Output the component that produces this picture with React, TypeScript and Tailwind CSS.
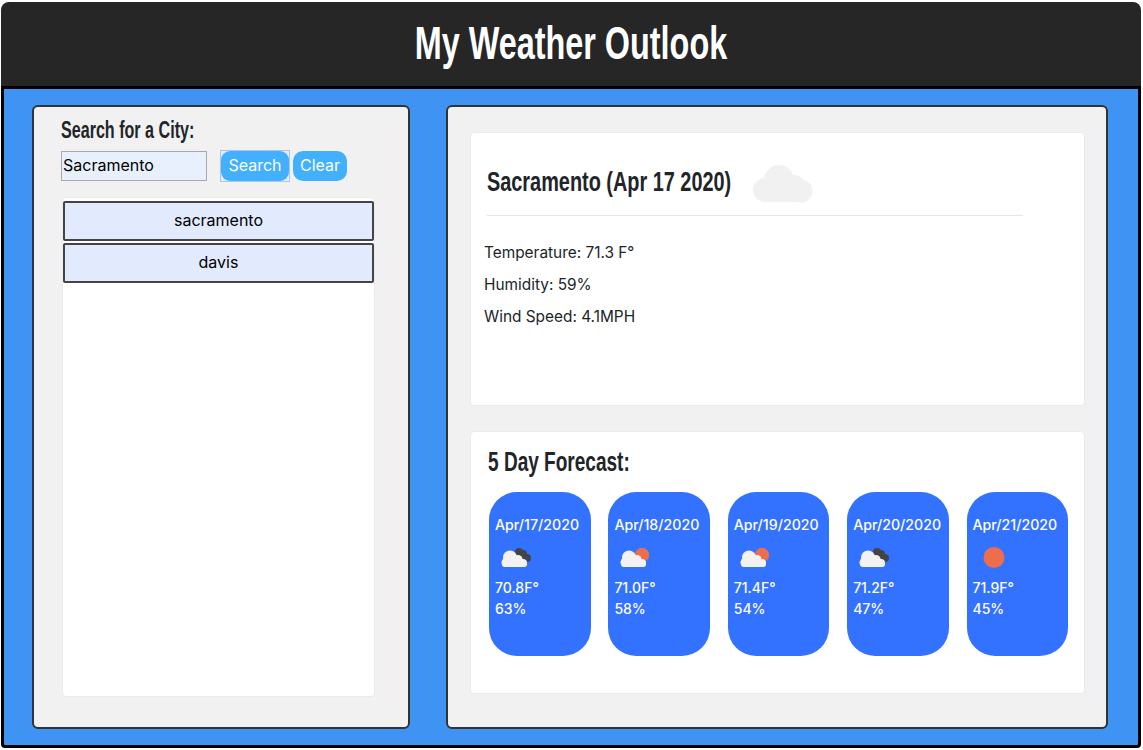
const narrow = "block whitespace-nowrap font-['Liberation_Sans',sans-serif] font-bold origin-left";

function SmallCloud() {
  return (
    <g fill="#f2f2f2">
      <circle cx="15" cy="10.5" r="7" />
      <circle cx="11" cy="15.5" r="4.5" />
      <circle cx="23" cy="12.5" r="4.5" />
      <circle cx="28" cy="16" r="4" />
      <rect x="7" y="14" width="25" height="6" rx="3" />
    </g>
  );
}

function WeatherIcon({ kind }: { kind: string }) {
  if (kind === "sun") {
    return (
      <svg width="40" height="22" viewBox="0 0 40 22" className="block">
        <circle cx="21" cy="10.5" r="10.5" fill="#ec6e4c" />
      </svg>
    );
  }
  return (
    <svg width="40" height="22" viewBox="0 0 40 22" className="block">
      {kind === "dark" ? (
        <g fill="#444444">
          <circle cx="24" cy="5" r="4" />
          <circle cx="28" cy="7" r="4" />
          <circle cx="32" cy="11" r="4" />
        </g>
      ) : (
        <circle cx="28" cy="8" r="7.2" fill="#ec6e4c" />
      )}
      <SmallCloud />
    </svg>
  );
}

const days = [
  { date: "Apr/17/2020", icon: "dark", temp: "70.8F°", hum: "63%" },
  { date: "Apr/18/2020", icon: "sunny", temp: "71.0F°", hum: "58%" },
  { date: "Apr/19/2020", icon: "sunny", temp: "71.4F°", hum: "54%" },
  { date: "Apr/20/2020", icon: "dark", temp: "71.2F°", hum: "47%" },
  { date: "Apr/21/2020", icon: "sun", temp: "71.9F°", hum: "45%" },
];

export default function App() {
  return (
    <div className="w-[1143px] h-[750px] bg-white pt-[2px] pl-[1px] font-['Inter',sans-serif] text-[#212529]">
      <div className="w-[1140px] h-[746px] flex flex-col">
        <header className="h-[84px] shrink-0 bg-[#262626] rounded-t-[8px] flex items-center justify-center pb-[2px]">
          <h1 className="whitespace-nowrap font-['Liberation_Sans',sans-serif] font-bold text-white text-[46px] leading-none scale-x-[0.704]">My Weather Outlook</h1>
        </header>
        <main className="flex-1 min-h-0 border-[3px] border-black rounded-b-[4px] bg-[#3f93f2] pt-[16px] pl-[28px] flex gap-[36px]">
          <section className="w-[378px] h-[624px] shrink-0 border-2 border-[#333333] rounded-[6px] bg-[#f1f1f1] pl-[27px] pt-[10px]">
            <h2 className={`${narrow} text-[23px] leading-[26px] scale-x-[0.70]`}>Search for a City:</h2>
            <div className="mt-[7px] flex items-center h-[32px]">
              <div className="w-[146px] h-[30px] border border-[#a9a9a9] bg-[#e8f0fe] pl-[1px] text-[16px] leading-[26px] text-black">Sacramento</div>
              <div className="ml-[13px] w-[70px] h-[32px] border border-[#a9c4fb] bg-[#e8effc]">
                <button className="w-full h-full rounded-[9px] bg-[#42b0fc] text-white text-[16px] leading-[24px] pb-[3px]">Search</button>
              </div>
              <button className="ml-[3px] w-[54px] h-[30px] rounded-[10px] bg-[#42b0fc] text-white text-[16px] leading-[24px] pb-[2px]">Clear</button>
            </div>
            <div className="ml-[1px] mt-[15px] w-[313px] h-[500px] bg-white border border-[#ebebeb] rounded-[4px] pt-[3px] flex flex-col gap-[2px]">
              <div className="h-[40px] border-2 border-[#444444] rounded-[2px] bg-[#e2ebfd] flex items-center justify-center text-[16px] leading-[24px] pb-[3px] text-black">sacramento</div>
              <div className="h-[40px] border-2 border-[#444444] rounded-[2px] bg-[#e2ebfd] flex items-center justify-center text-[16px] leading-[24px] pb-[3px] text-black">davis</div>
            </div>
          </section>
          <section className="w-[662px] h-[624px] shrink-0 border-2 border-[#333333] rounded-[6px] bg-[#f1f1f1] pl-[22px] pt-[25px]">
            <div className="w-[615px] h-[274px] bg-white border border-[#ebebeb] rounded-[4px] pl-[13px] pt-[32px]">
              <div className="ml-[3px] w-[536px] h-[51px] border-b border-[#e6e6e6] flex items-start">
                <h2 className={`${narrow} w-[245px] text-[28px] leading-[34px] scale-x-[0.71]`}>Sacramento (Apr 17 2020)</h2>
                <svg width="62" height="38" viewBox="0 0 62 38" className="ml-[20px] block">
                  <g fill="#f1f1f1">
                    <circle cx="27" cy="15" r="15" />
                    <circle cx="43" cy="20" r="10" />
                    <circle cx="13" cy="25" r="12" />
                    <circle cx="49" cy="26" r="11.5" />
                    <rect x="10" y="25" width="40" height="12" />
                  </g>
                </svg>
              </div>
              <div className="mt-[25px] flex flex-col gap-[8px] text-[15.4px] leading-[24px] text-[#212529]">
                <p>Temperature: 71.3 F°</p>
                <p>Humidity: 59%</p>
                <p>Wind Speed: 4.1MPH</p>
              </div>
            </div>
            <div className="mt-[25px] w-[615px] h-[263px] bg-white border border-[#ebebeb] rounded-[4px] pl-[17px] pt-[14px]">
              <h2 className={`${narrow} text-[28px] leading-[32px] scale-x-[0.68]`}>5 Day Forecast:</h2>
              <div className="ml-[1px] mt-[14px] w-[579px] flex justify-between">
                {days.map((d) => (
                  <div key={d.date} className="w-[101.5px] h-[164px] rounded-[28px] bg-[#3371ff] text-white pl-[6px] pt-[23px] text-[14.2px] leading-[20px] font-medium">
                    <div>{d.date}</div>
                    <div className="mt-[12px] h-[22px]"><WeatherIcon kind={d.icon} /></div>
                    <div className="mt-[9px] text-[14px]">{d.temp}</div>
                    <div className="mt-[1px] text-[14px]">{d.hum}</div>
                  </div>
                ))}
              </div>
            </div>
          </section>
        </main>
      </div>
    </div>
  );
}
